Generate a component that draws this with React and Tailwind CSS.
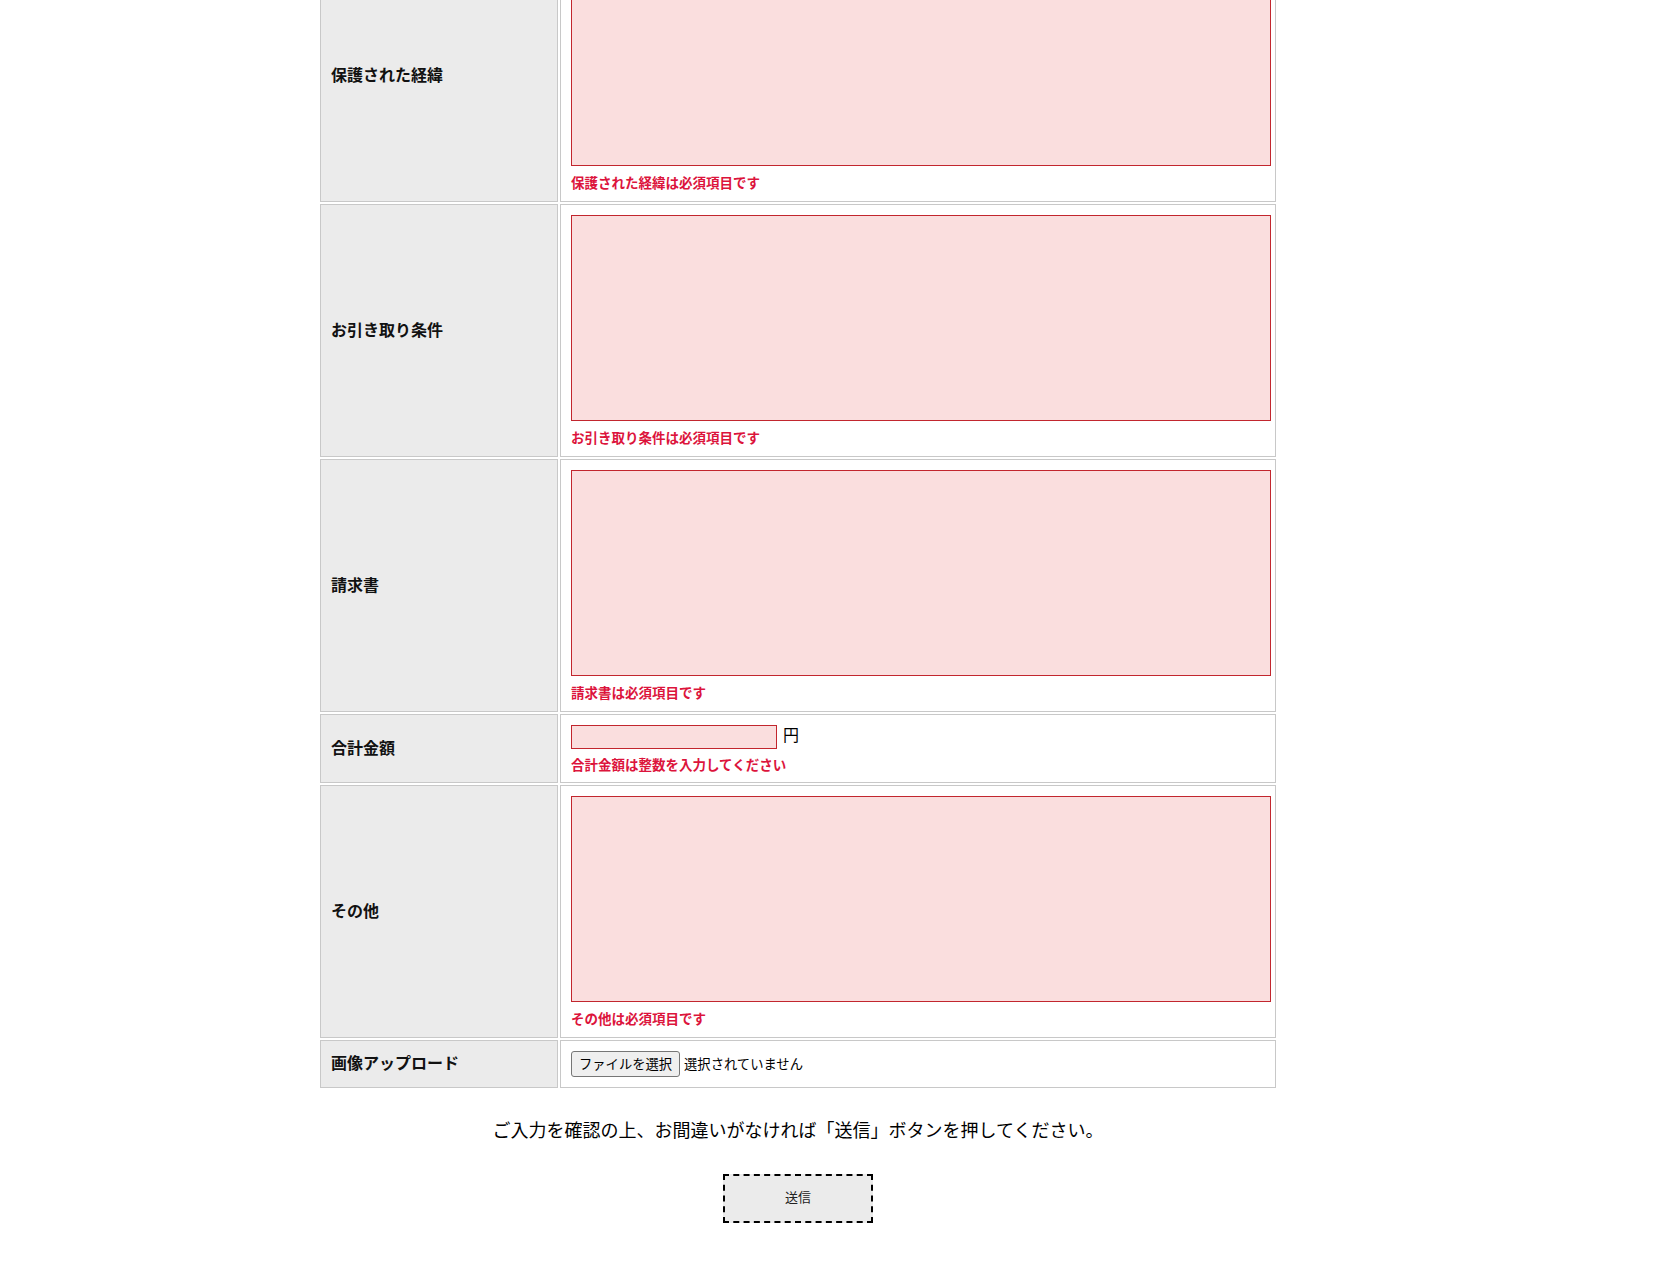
import React from "react";

const FONT = { fontFamily: '"Noto Sans CJK JP", "Noto Sans", sans-serif' };

function Label({ children }) {
  return (
    <div className="flex items-center bg-[#ebebeb] border border-[#c8c8c8] px-[10px] pb-[4px] text-[16px] font-bold text-[#111]">
      {children}
    </div>
  );
}

function TextareaRow({ label, error }) {
  return (
    <>
      <Label>{label}</Label>
      <div className="bg-white border border-[#c8c8c8] p-[10px]">
        <textarea className="block w-[700px] h-[206px] resize-none border border-[#c2262e] bg-[#fadede] outline-none" />
        <div className="mt-[8px] leading-[17px] text-[13.5px] font-bold text-[#dc143c]">{error}</div>
      </div>
    </>
  );
}

export default function App() {
  return (
    <div className="flex flex-col min-h-screen overflow-hidden bg-white text-black" style={FONT}>
      <div className="w-[960px] ml-[318px] -mt-[53px] pb-[60px]">
        <div className="grid grid-cols-[238px_716px] gap-[2px] p-[2px]">
          <TextareaRow label="保護された経緯" error="保護された経緯は必須項目です" />
          <TextareaRow label="お引き取り条件" error="お引き取り条件は必須項目です" />
          <TextareaRow label="請求書" error="請求書は必須項目です" />

          <Label>合計金額</Label>
          <div className="bg-white border border-[#c8c8c8] p-[10px]">
            <div className="flex items-start h-[24px]">
              <input type="text" className="w-[206px] h-[24px] border border-[#c2262e] bg-[#fadede] outline-none" />
              <span className="ml-[6px] text-[16px] leading-[18px]">円</span>
            </div>
            <div className="mt-[7px] leading-[16px] text-[13.5px] font-bold text-[#dc143c]">合計金額は整数を入力してください</div>
          </div>

          <TextareaRow label="その他" error="その他は必須項目です" />

          <Label>画像アップロード</Label>
          <div className="bg-white border border-[#c8c8c8] p-[10px] flex items-center">
            <button type="button" className="h-[26px] px-[7px] pb-[1px] border border-[#767676] rounded-[3px] bg-[#efefef] text-[13.3px] leading-[22px] text-black">
              ファイルを選択
            </button>
            <span className="ml-[4px] pb-[1px] text-[13.3px] text-black">選択されていません</span>
          </div>
        </div>

        <p className="mt-[26px] text-center text-[18px] leading-[27px] text-black">
          ご入力を確認の上、お間違いがなければ「送信」ボタンを押してください。
        </p>

        <div className="flex justify-center mt-[31px]">
          <button type="button" className="w-[150px] h-[49px] pb-[3px] border-2 border-dashed border-black bg-[#ebebeb] text-[13px] text-[#222]">
            送信
          </button>
        </div>
      </div>
    </div>
  );
}
